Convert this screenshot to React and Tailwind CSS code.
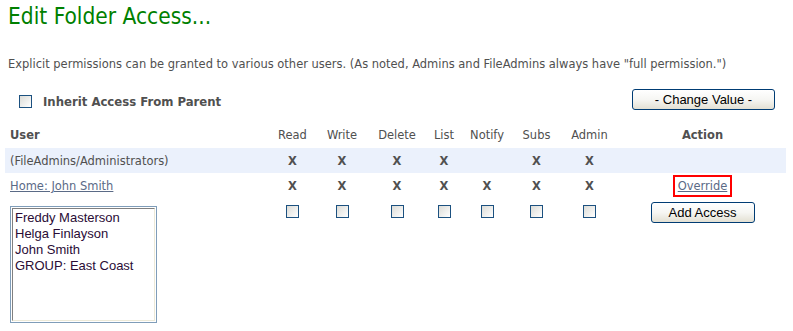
import React from 'react'

const perms = ['Read', 'Write', 'Delete', 'List', 'Notify', 'Subs', 'Admin']

const rows = [
    { user: '(FileAdmins/Administrators)', link: false, marks: [1, 1, 1, 1, 0, 1, 1], shaded: true },
    { user: 'Home: John Smith', link: true, marks: [1, 1, 1, 1, 1, 1, 1], shaded: false },
]

const members = ['Freddy Masterson', 'Helga Finlayson', 'John Smith', 'GROUP: East Coast']

const cols = 'grid grid-cols-[263px_49px_50px_60px_34px_52px_47px_59px_167px]'

const Box = () => (
    <span className="block w-[13px] h-[13px] border border-[#1c5180] bg-gradient-to-br from-[#dcdcd7] to-white" />
)

const XpButton = ({ children, className }) => (
    <button
        type="button"
        className={`h-[21px] rounded-[3px] border border-[#003c74] bg-gradient-to-b from-white via-[#f6f6f3] to-[#e3e0d3] font-['Liberation_Sans',Arial,sans-serif] text-[13px] leading-[19px] text-black ${className}`}
    >
        {children}
    </button>
)

export default function App() {
    return (
        <div className="w-[793px] h-[331px] overflow-hidden bg-white font-['DejaVu_Sans_Condensed','DejaVu_Sans',sans-serif] text-[#505050]">
            <h1 className="pl-2 pt-[2px] text-[22.5px] leading-[28px] text-[#008000]">Edit Folder Access...</h1>

            <p className="mt-[26px] pl-2 text-[12.75px] leading-[15px]">
                Explicit permissions can be granted to various other users. (As noted, Admins and FileAdmins always have "full permission.")
            </p>

            {/* inherit + change value */}
            <div className="mt-[18px] flex items-start justify-between">
                <label className="mt-[6px] ml-[19px] flex items-center gap-[11px]">
                    <Box />
                    <span className="text-[13px] leading-[13px] font-bold">Inherit Access From Parent</span>
                </label>
                <XpButton className="mr-[18px] w-[143px]">- Change Value -</XpButton>
            </div>

            {/* permissions table */}
            <div className="mt-[12px] ml-[5px] w-[781px] text-[12.75px]">
                <div className={`${cols} h-[26px] items-center`}>
                    <span className="pl-[5px] font-bold">User</span>
                    {perms.map((p) => (
                        <span key={p} className="text-center">{p}</span>
                    ))}
                    <span className="text-center font-bold">Action</span>
                </div>

                {rows.map((r) => (
                    <div key={r.user} className={`${cols} items-center ${r.shaded ? 'h-[25px] bg-[#ebf1fc]' : 'h-[26px]'}`}>
                        <span className={`pl-[5px] ${r.link ? 'underline text-[#5a6a86]' : ''}`}>{r.user}</span>
                        {r.marks.map((m, i) => (
                            <span key={i} className="text-center font-bold">{m ? 'X' : ''}</span>
                        ))}
                        <span className="flex justify-center">
                            {r.link && (
                                <span className="border-2 border-[#ff0000] px-[3px] h-[22px] leading-[18px] underline text-[#5a6a86]">Override</span>
                            )}
                        </span>
                    </div>
                ))}

                <div className={`${cols} items-start`}>
                    <div className="pl-[5px] pt-[7px]">
                        <div className="w-[147px] h-[117px] border border-[#7f9db9] p-px">
                            <div className="h-full border border-t-[#808080] border-l-[#808080] border-b-[#ece9d8] border-r-[#ece9d8] px-[2px] pt-px font-['Liberation_Sans',Arial,sans-serif] text-[13px] leading-[16px] text-[#2a0c36]">
                                {members.map((m) => (
                                    <div key={m}>{m}</div>
                                ))}
                            </div>
                        </div>
                    </div>
                    {perms.map((p) => (
                        <span key={p} className="flex justify-center pt-[6px]">
                            <Box />
                        </span>
                    ))}
                    <span className="flex justify-center pt-[3px]">
                        <XpButton className="w-[104px]">Add Access</XpButton>
                    </span>
                </div>
            </div>
        </div>
    )
}
